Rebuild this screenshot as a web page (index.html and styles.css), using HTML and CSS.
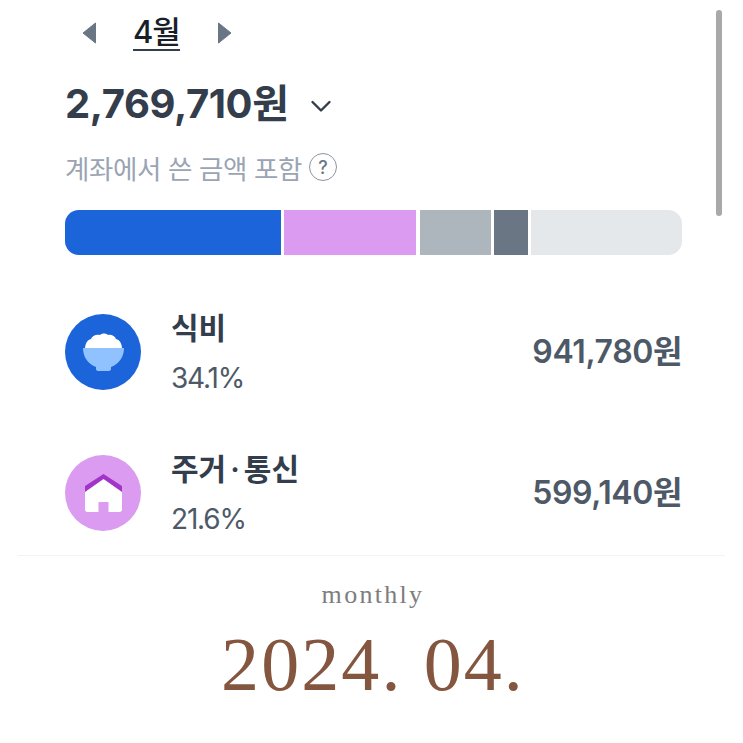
FILE: index.html
```html
<!DOCTYPE html>
<html lang="ko">
<head>
<meta charset="utf-8">
<title>2024. 04.</title>
<link rel="stylesheet" href="styles.css">
</head>
<body>
<main class="page">
  <section class="app">
    <div class="month-nav">
      <svg class="arrow" viewBox="0 0 14 22" width="14" height="22"><path d="M13.5 1v20L1 11z" fill="#6b7684" stroke="#6b7684" stroke-linejoin="round"/></svg>
      <span class="month">4월</span>
      <svg class="arrow" viewBox="0 0 14 22" width="14" height="22"><path d="M.5 1v20L13 11z" fill="#6b7684" stroke="#6b7684" stroke-linejoin="round"/></svg>
    </div>
    <div class="total-row">
      <span class="total">2,769,710원</span>
      <svg class="chevron" viewBox="0 0 22 14" width="22" height="14"><path d="M2.5 3l8.500 8.500L19.500 3" fill="none" stroke="#333d4b" stroke-width="2.400" stroke-linecap="round" stroke-linejoin="round"/></svg>
    </div>
    <div class="note">
      <span>계좌에서 쓴 금액 포함</span>
      <span class="help">?</span>
    </div>
    <div class="bar">
      <div class="seg seg-food"></div>
      <div class="seg seg-home"></div>
      <div class="seg seg-gray"></div>
      <div class="seg seg-dark"></div>
      <div class="seg seg-rest"></div>
    </div>
    <div class="row row-first">
      <div class="icon icon-food">
        <svg viewBox="0 0 41 38" width="41" height="38">
          <path d="M2 16C2 11 4 7 8 6c1-3 5-5 9-4 2-2 6-2 8 0 3-1 7 1 8 4 4 1 6 5 6 10z" fill="#fff"/>
          <path d="M0 15h41c0 9-5 16-13 19v2c0 1-1 2-2 2H15c-1 0-2-1-2-2v-2C5 31 0 24 0 15z" fill="#90c2ff"/>
        </svg>
      </div>
      <div class="info">
        <div class="name">식비</div>
        <div class="pct">34.1%</div>
      </div>
      <div class="amount">941,780원</div>
    </div>
    <div class="row">
      <div class="icon icon-home">
        <svg viewBox="0 0 37 38" width="37" height="38">
          <path d="M18.500 0L37 12v8L18.500 7 0 20v-8z" fill="#a234c7"/>
          <path d="M18.500 5L37 18v17.500c0 1.500-1 2.500-2.500 2.500H23.500V28h-10v10h-11C1 38 0 37 0 35.500V18z" fill="#fff"/>
        </svg>
      </div>
      <div class="info">
        <div class="name">주거<span class="dot">·</span>통신</div>
        <div class="pct">21.6%</div>
      </div>
      <div class="amount">599,140원</div>
    </div>
  </section>
  <footer class="caption">
    <div class="monthly">monthly</div>
    <div class="date">2024. 04.</div>
  </footer>
</main>
<div class="scrollbar"></div>
</body>
</html>
```
FILE: styles.css
```css
html, body {
  margin: 0;
  padding: 0;
  background: #fff;
}
body {
  height: 743px;
  overflow: hidden;
  font-family: Inter, "Noto Sans CJK KR", sans-serif;
  color: #333d4b;
}
.page {
  display: flex;
  flex-direction: column;
  align-items: stretch;
}
.app {
  height: 556px;
  box-sizing: border-box;
  margin: 0 18px;
  padding: 13px 43px 0 47px;
  border-bottom: 1px solid #f5f3f1;
  overflow: hidden;
}
.month-nav {
  display: flex;
  align-items: center;
  height: 40px;
  padding-left: 17px;
}
.month {
  font-size: 31px;
  font-weight: 500;
  line-height: 34px;
  letter-spacing: -1px;
  color: #191f28;
  margin: 0 38px 0 37px;
  border-bottom: 2px solid #333d4b;
}
.total-row {
  display: flex;
  align-items: center;
  margin-top: 27px;
  height: 48px;
}
.total {
  font-size: 40px;
  font-weight: 700;
  letter-spacing: -0.400px;
  line-height: 48px;
}
.chevron {
  margin-left: 21px;
  margin-top: 4px;
}
.note {
  display: flex;
  align-items: center;
  gap: 7px;
  margin-top: 22px;
  height: 34px;
  font-size: 26.500px;
  letter-spacing: -0.400px;
  color: #9aa4b2;
}
.help {
  width: 28px;
  height: 28px;
  box-sizing: border-box;
  border: 1.500px solid #8b95a1;
  border-radius: 50%;
  display: flex;
  align-items: center;
  justify-content: center;
  font-size: 18px;
  font-weight: 500;
  letter-spacing: 0;
  color: #6b7684;
}
.bar {
  display: flex;
  gap: 3px;
  margin-top: 26px;
  height: 45px;
  border-radius: 14px;
  overflow: hidden;
}
.seg { height: 100%; }
.seg-food { width: 216px; background: #1b64da; }
.seg-home { width: 132px; background: #da9bf0; margin-right: 1px; }
.seg-gray { width: 71px; background: #adb5bd; }
.seg-dark { width: 34px; background: #6b7684; }
.seg-rest { flex: 1; background: #e5e8eb; }
.row {
  display: flex;
  align-items: center;
  height: 100px;
  margin-top: 41px;
}
.row-first { margin-top: 47px; }
.icon {
  width: 76px;
  height: 76px;
  border-radius: 50%;
  display: flex;
  align-items: center;
  justify-content: center;
  flex: none;
}
.icon-food { background: #1b64da; }
.icon-home { background: #da9bf0; }
.info {
  margin-left: 30px;
  flex: 1;
}
.name {
  font-size: 30px;
  font-weight: 600;
  line-height: 40px;
}
.dot {
  margin: 0 4px;
}
.pct {
  font-size: 28px;
  line-height: 36px;
  margin-top: 12px;
  letter-spacing: -1.200px;
  color: #4e5968;
}
.amount {
  font-size: 32px;
  font-weight: 600;
  letter-spacing: -0.400px;
  padding-bottom: 7px;
  color: #4e5968;
}
.caption {
  padding-left: 3px;
  text-align: center;
}
.monthly {
  margin-top: 24px;
  font-family: "Liberation Serif", serif;
  font-size: 26px;
  line-height: 30px;
  letter-spacing: 2.300px;
  color: #7d7d7d;
}
.date {
  margin-top: 10px;
  font-family: "Liberation Serif", serif;
  font-size: 76px;
  line-height: 88px;
  letter-spacing: 2.100px;
  color: #85563f;
}
.scrollbar {
  position: absolute;
  top: 10px;
  left: 716px;
  width: 6px;
  height: 206px;
  border-radius: 3px;
  background: #a9a9a9;
}
```
